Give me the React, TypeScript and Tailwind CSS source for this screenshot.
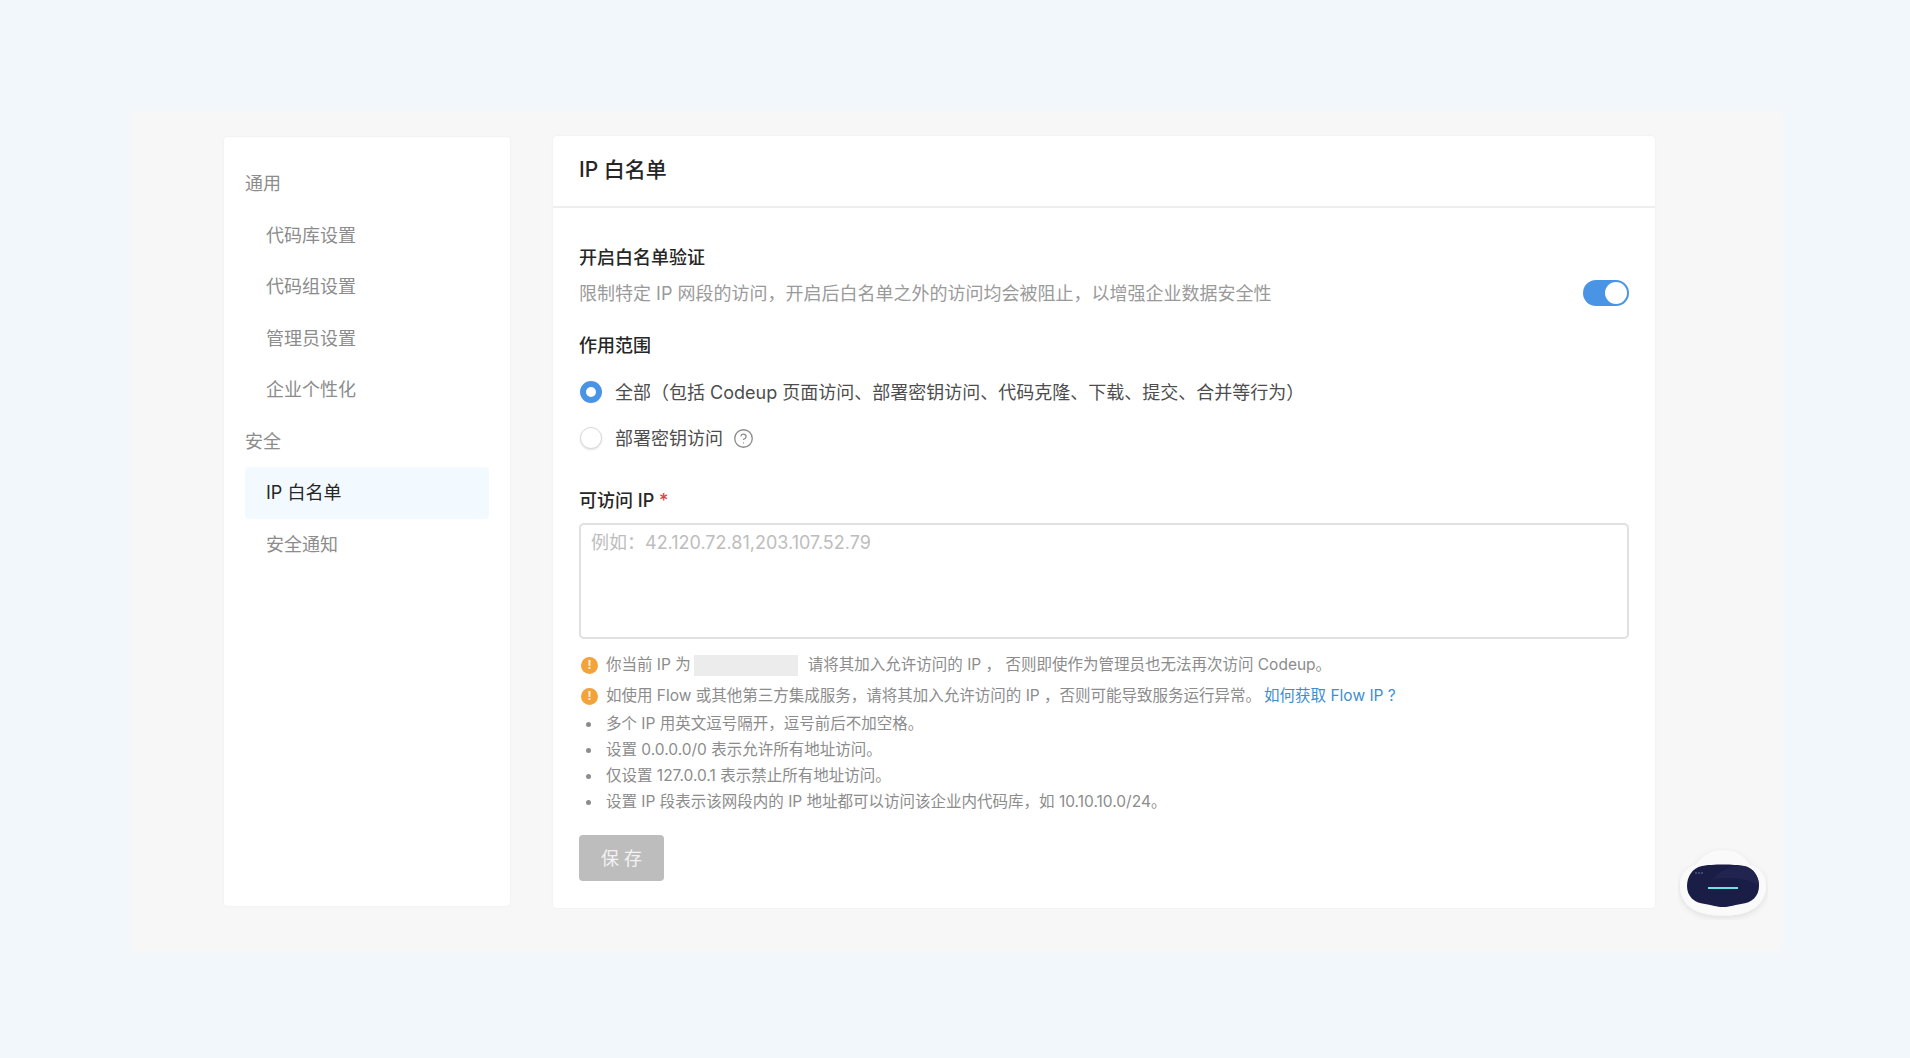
import { CircleHelp } from "lucide-react";

const FONT = "font-['Inter','Noto_Sans_CJK_SC',sans-serif]";

const Section = ({ title }: { title: string }) => (
  <div className="h-[51.5px] flex items-center text-[18px] text-[#8c8c8c]">{title}</div>
);

const NavItem = ({ title, active }: { title: string; active?: boolean }) => (
  <div
    className={`h-[51.5px] flex items-center pl-[21px] text-[18px] rounded-[4px] ${
      active ? "bg-[#f3faff] text-[#262626]" : "text-[#8c8c8c]"
    }`}
  >
    {title}
  </div>
);

const Warn = () => (
  <span className="w-[17px] h-[17px] rounded-full bg-[#f2a33a] text-[#fdf3e3] text-[12px] font-bold flex items-center justify-center shrink-0 ml-[2px] mr-[8px]">
    !
  </span>
);

const Bullet = ({ text }: { text: string }) => (
  <li className="h-[26px] flex items-center">
    <span className="w-[5px] h-[5px] rounded-full bg-[#8c8c8c] ml-[7px] mr-[15px]" />
    {text}
  </li>
);

const Robot = () => (
  <svg width="90" height="72" viewBox="0 0 90 72" className="absolute left-[1678px] top-[848px]">
    <defs>
      <filter id="sh" x="-20%" y="-20%" width="140%" height="150%">
        <feDropShadow dx="0" dy="2" stdDeviation="3" floodColor="#000" floodOpacity="0.1" />
      </filter>
    </defs>
    <path
      d="M45 2C57 2 66 8 72 17C83 20 88 28 88 38C88 52 78 63 62 66C52 68 38 68 28 66C12 63 2 52 2 38C2 28 7 20 18 17C24 8 33 2 45 2Z"
      fill="#fafafb"
      filter="url(#sh)"
    />
    <path
      d="M24 18C34 16 56 16 66 18C76 20 81 29 81 38C81 48 74 55 63 56C55 57 52 59 45 59C38 59 35 57 27 56C16 55 9 48 9 38C9 29 14 20 24 18Z"
      fill="#1a1d45"
    />
    <path d="M34 32C42 22 54 17 66 18C76 20 81 29 81 38C70 30 50 28 34 32Z" fill="#20244f" />
    <rect x="30" y="39" width="30" height="2" fill="#6fe0e6" />
    <circle cx="18" cy="25" r="0.8" fill="#6f7fa8" />
    <circle cx="21" cy="25" r="0.8" fill="#6f7fa8" />
    <circle cx="24" cy="25" r="0.8" fill="#6f7fa8" />
  </svg>
);

export default function App() {
  return (
    <div className={`relative w-[1910px] h-[1058px] overflow-hidden bg-[#f2f7fb] pt-[113px] pl-[133px] ${FONT}`}>
      <div className="w-[1648px] h-[837px] bg-[#f7f7f7] shadow-[0_0_6px_2px_#f7f7f7] pt-[23px] pl-[91px] flex items-start">
        <aside className="w-[286px] h-[769px] mt-[1px] bg-white rounded-[4px] shadow-[0_0_3px_rgba(0,0,0,0.05)] pt-[21px] px-[21px]">
          <Section title="通用" />
          <NavItem title="代码库设置" />
          <NavItem title="代码组设置" />
          <NavItem title="管理员设置" />
          <NavItem title="企业个性化" />
          <Section title="安全" />
          <NavItem title="IP 白名单" active />
          <NavItem title="安全通知" />
        </aside>
        <main className="w-[1102px] h-[772px] ml-[43px] bg-white rounded-[4px] shadow-[0_0_3px_rgba(0,0,0,0.05)]">
          <div className="h-[72px] flex items-center pl-[26px] pb-[3px] border-b-2 border-[#eeeeee] text-[21px] font-medium text-[#262626]">
            IP 白名单
          </div>
          <div className="px-[26px] pt-[37px]">
            <h3 className="h-[26px] leading-[26px] text-[18px] font-medium text-[#262626]">开启白名单验证</h3>
            <div className="flex items-center justify-between mt-[9px] h-[26px]">
              <p className="text-[18px] text-[#9a9a9a]">
                限制特定 IP 网段的访问，开启后白名单之外的访问均会被阻止，以增强企业数据安全性
              </p>
              <span className="w-[46px] h-[26px] rounded-full bg-[#4a94e6] flex items-center justify-end pr-[2px]">
                <span className="w-[22px] h-[22px] rounded-full bg-white" />
              </span>
            </div>
            <h3 className="mt-[27px] h-[26px] leading-[26px] text-[18px] font-medium text-[#262626]">作用范围</h3>
            <div className="mt-[20px] h-[26px] flex items-center text-[18px] text-[#4d4d4d]">
              <span className="w-[22px] h-[22px] ml-[1px] rounded-full border-[6px] border-[#4a94e6] bg-white mr-[13px]" />
              全部（包括 Codeup 页面访问、部署密钥访问、代码克隆、下载、提交、合并等行为）
            </div>
            <div className="mt-[20px] h-[26px] flex items-center text-[18px] text-[#4d4d4d]">
              <span className="w-[22px] h-[22px] ml-[1px] rounded-full border border-[#d9d9d9] bg-white shadow-[0_1px_2px_rgba(0,0,0,0.12)] mr-[13px]" />
              部署密钥访问
              <CircleHelp className="w-[21px] h-[21px] ml-[10px] text-[#8c8c8c]" strokeWidth={1.5} />
            </div>
            <h3 className="mt-[37px] h-[26px] leading-[26px] text-[18px] font-medium text-[#262626]">
              可访问 IP <span className="text-[#d9453f]">*</span>
            </h3>
            <div className="mt-[9px] h-[116px] border-2 border-[#e0e0e0] rounded-[5px] px-[10px] pt-[5px] text-[18px] leading-[26px] text-[#bdbdbd]">
              例如：42.120.72.81,203.107.52.79
            </div>
            <div className="mt-[13px] text-[15.5px] text-[#8c8c8c]">
              <div className="h-[26px] flex items-center">
                <Warn />
                你当前 IP 为
                <span className="w-[104px] h-[21px] bg-[#ececec] mr-[10px] ml-[3px]" />
                请将其加入允许访问的 IP ， 否则即使作为管理员也无法再次访问 Codeup。
              </div>
              <div className="mt-[5px] h-[26px] flex items-center">
                <Warn />
                如使用 Flow 或其他第三方集成服务，请将其加入允许访问的 IP ，否则可能导致服务运行异常。
                <span className="ml-[3px] text-[#3c8fd0]">如何获取 Flow IP ?</span>
              </div>
              <ul className="mt-[2px]">
                <Bullet text="多个 IP 用英文逗号隔开，逗号前后不加空格。" />
                <Bullet text="设置 0.0.0.0/0 表示允许所有地址访问。" />
                <Bullet text="仅设置 127.0.0.1 表示禁止所有地址访问。" />
                <Bullet text="设置 IP 段表示该网段内的 IP 地址都可以访问该企业内代码库，如 10.10.10.0/24。" />
              </ul>
            </div>
            <button className="mt-[20px] w-[85px] h-[46px] rounded-[4px] bg-[#bdbdbd] text-[18px] text-[#f2f2f2]">
              保 存
            </button>
          </div>
        </main>
      </div>
      <Robot />
    </div>
  );
}
